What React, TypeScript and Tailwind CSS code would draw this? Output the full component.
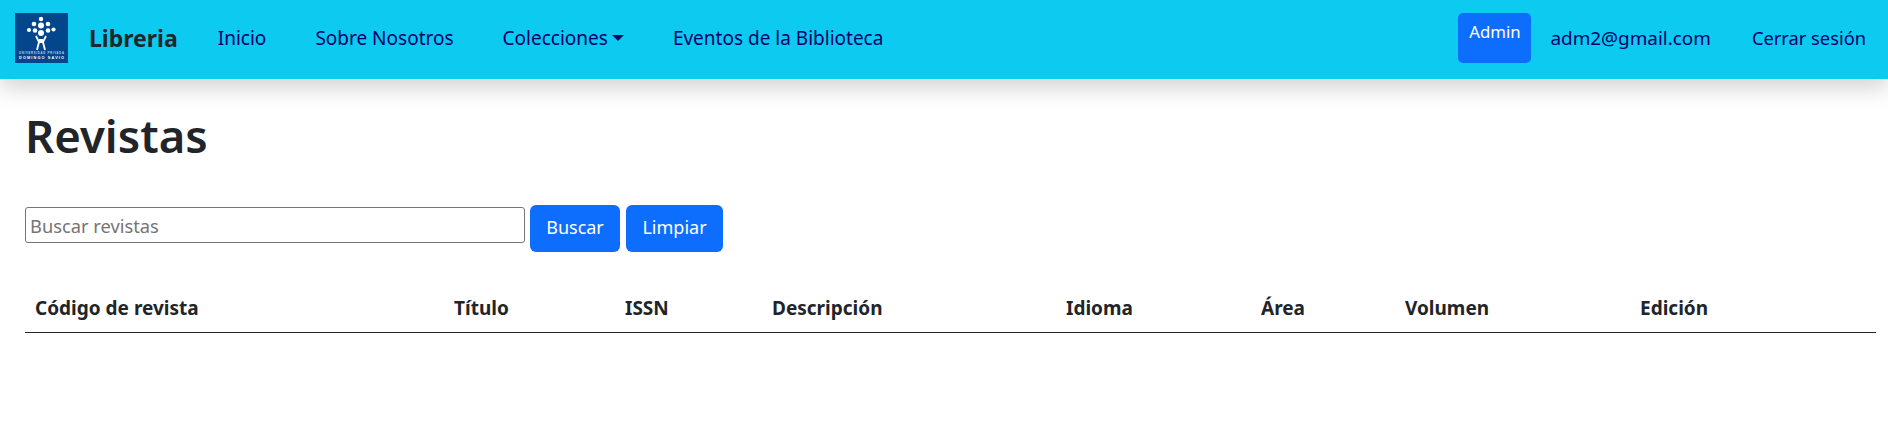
const navLinks = ["Inicio", "Sobre Nosotros"];

const columns = [
  { label: "Código de revista", width: "w-[419px]" },
  { label: "Título", width: "w-[171px]" },
  { label: "ISSN", width: "w-[147px]" },
  { label: "Descripción", width: "w-[294px]" },
  { label: "Idioma", width: "w-[195px]" },
  { label: "Área", width: "w-[144px]" },
  { label: "Volumen", width: "w-[235px]" },
  { label: "Edición", width: "" },
];

function Logo() {
  return (
    <svg width="53" height="50" viewBox="0 0 53 50" className="shrink-0 mb-[4px]">
      <rect width="53" height="50" fill="#03468c" />
      <g fill="#ffffff">
        <circle cx="26" cy="6" r="2.2" />
        <circle cx="19" cy="11" r="2.3" />
        <circle cx="26" cy="12.5" r="3" />
        <circle cx="33" cy="11" r="2.3" />
        <circle cx="14" cy="17" r="2.1" />
        <circle cx="20" cy="17.5" r="2.3" />
        <circle cx="26" cy="20" r="3" />
        <circle cx="33" cy="17.5" r="2.3" />
        <circle cx="38.5" cy="16.5" r="2.1" />
      </g>
      <path d="M21 23 L24 29 L22 37 M31 23 L28 29 L30 37 M24 29 L28 29 M24 27 L28 27" stroke="#ffffff" strokeWidth="1.8" fill="none" />
      <text x="4" y="41" textLength="45" fontSize="2.7" fontWeight="700" fill="#c9d8ea" fontFamily="'Liberation Sans', sans-serif">UNIVERSIDAD PRIVADA</text>
      <text x="4" y="46" textLength="45" fontSize="3.8" fontWeight="700" fill="#ffffff" fontFamily="'Liberation Sans', sans-serif">DOMINGO SAVIO</text>
    </svg>
  );
}

export default function App() {
  return (
    <div className="min-h-[443px] bg-white font-['Noto_Sans',sans-serif] text-[#212529] text-[18px]">
      {/* Navbar */}
      <nav className="h-[79px] bg-[#0dcaf0] shadow-[0_10px_20px_rgba(0,0,0,0.16)] flex items-center pl-[15px] pr-[22px]">
        <Logo />
        <span className="ml-[21px] mb-[2px] text-[23px] font-bold">Libreria</span>
        <div className="ml-[40px] mb-[2px] flex items-center gap-[49px] text-[19px] text-[#000068]">
          {navLinks.map((link) => (
            <a key={link}>{link}</a>
          ))}
          <a className="flex items-center gap-[4px]">
            Colecciones
            <span className="mt-[-2px] border-x-[6px] border-t-[6px] border-x-transparent border-t-[#0a0a60]" />
          </a>
          <a>Eventos de la Biblioteca</a>
        </div>
        <div className="ml-auto flex items-center text-[18.9px] text-[#000068]">
          <span className="w-[73px] h-[50px] mb-[4px] rounded-[5px] bg-[#0d6efd] text-white text-center pt-[6px] text-[16.8px]">Admin</span>
          <a className="ml-[19px] mb-[2px]">adm2@gmail.com</a>
          <a className="ml-[41px] mb-[3px] text-[18.3px]">Cerrar sesión</a>
        </div>
      </nav>

      {/* Content */}
      <main className="pl-[25px] pr-[12px]">
        <h1 className="mt-[27px] text-[45.5px] leading-[58px] font-semibold">Revistas</h1>
        <form className="mt-[41px] flex items-start">
          <input
            placeholder="Buscar revistas"
            className="mt-[2px] w-[500px] h-[36px] px-[4px] text-[18.3px] border border-[#767676] rounded-[3px] placeholder:text-[#757575]"
          />
          <button type="button" className="ml-[5px] h-[47px] w-[90px] pb-[2px] rounded-[6px] bg-[#0d6efd] text-white">Buscar</button>
          <button type="button" className="ml-[6px] h-[47px] w-[97px] pb-[2px] rounded-[6px] bg-[#0d6efd] text-white">Limpiar</button>
        </form>
        <table className="mt-[32px] w-full table-fixed border-collapse text-[19px]">
          <thead>
            <tr className="border-b border-[#212529]">
              {columns.map((col) => (
                <th key={col.label} className={`${col.width} h-[48px] px-[10px] text-left font-bold`}>
                  {col.label}
                </th>
              ))}
            </tr>
          </thead>
        </table>
      </main>
    </div>
  );
}
